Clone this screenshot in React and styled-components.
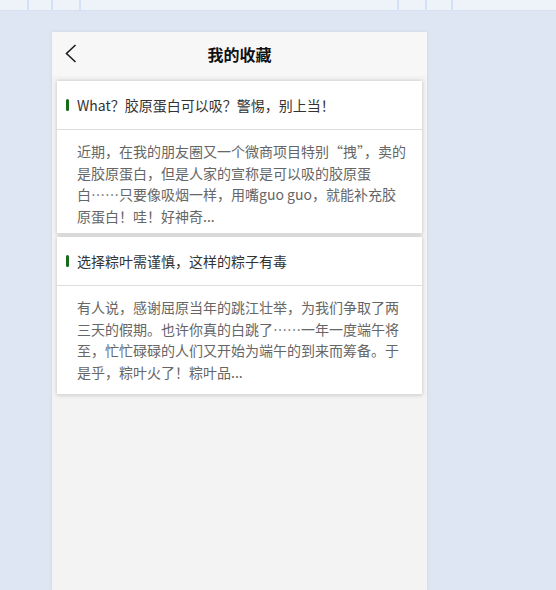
import React from "react";
import styled, { createGlobalStyle } from "styled-components";

const articles = [
  {
    id: 1,
    title: "What？胶原蛋白可以吸？警惕，别上当！",
    summary:
      "近期，在我的朋友圈又一个微商项目特别“拽”，卖的是胶原蛋白，但是人家的宣称是可以吸的胶原蛋白……只要像吸烟一样，用嘴guo guo，就能补充胶原蛋白！哇！好神奇...",
  },
  {
    id: 2,
    title: "选择粽叶需谨慎，这样的粽子有毒",
    summary:
      "有人说，感谢屈原当年的跳江壮举，为我们争取了两三天的假期。也许你真的白跳了……一年一度端午将至，忙忙碌碌的人们又开始为端午的到来而筹备。于是乎，粽叶火了！粽叶品...",
  },
];

const ticks = [27, 22, 26, 316, 26, 24];

const App = () => {
  return (
    <>
      <GlobalStyle />
      <Ruler>
        {ticks.map((gap, i) => (
          <Tick key={i} $offset={gap} />
        ))}
      </Ruler>
      <Stage>
        <Phone>
          <Header>
            <BackButton aria-label="返回">
              <svg width="12" height="19" viewBox="0 0 12 19">
                <path
                  d="M10.5 1 L1.5 9.5 L10.5 18"
                  fill="none"
                  stroke="#1f1f1f"
                  strokeWidth="1.6"
                />
              </svg>
            </BackButton>
            <Title>我的收藏</Title>
          </Header>
          <List>
            {articles.map((item) => (
              <Card key={item.id}>
                <CardHead>
                  <Marker />
                  <CardTitle>{item.title}</CardTitle>
                </CardHead>
                <CardBody>{item.summary}</CardBody>
              </Card>
            ))}
          </List>
        </Phone>
      </Stage>
    </>
  );
};

export default App;

const GlobalStyle = createGlobalStyle`
  html, body {
    margin: 0;
    padding: 0;
    background: #dfe6f3;
    font-family: "Noto Sans CJK SC", "Liberation Sans", sans-serif;
  }
  #root {
    height: 590px;
    display: flex;
    flex-direction: column;
    overflow: hidden;
  }
`;

const Ruler = styled.div`
  height: 10px;
  flex-shrink: 0;
  display: flex;
  background: #eef2f9;
  border-bottom: 1px solid #d8e1ef;
`;

const Tick = styled.span`
  width: 2px;
  height: 10px;
  margin-left: ${(p) => p.$offset}px;
  background: #d3e1fb;
`;

const Stage = styled.div`
  flex: 1;
  display: flex;
  padding: 21px 0 0 52px;
  min-height: 0;
`;

const Phone = styled.div`
  width: 375px;
  display: flex;
  flex-direction: column;
  background: #f3f3f3;
  box-shadow: 0 0 3px rgba(120, 130, 150, 0.18);
`;

const Header = styled.div`
  height: 44px;
  flex-shrink: 0;
  display: flex;
  align-items: center;
  justify-content: center;
  position: relative;
  background: #f7f7f7;
`;

const BackButton = styled.button`
  position: absolute;
  left: 13px;
  top: 12px;
  padding: 0;
  border: none;
  background: transparent;
  display: flex;
`;

const Title = styled.h1`
  margin: 0;
  font-size: 16px;
  font-weight: bold;
  color: #111;
`;

const List = styled.div`
  display: flex;
  flex-direction: column;
  gap: 3px;
  padding: 5px;
`;

const Card = styled.div`
  background: #fff;
  box-shadow: 0 0 4px rgba(0, 0, 0, 0.22);
  border-bottom: 1px solid #dcdcdc;
`;

const CardHead = styled.div`
  height: 48px;
  display: flex;
  align-items: center;
  gap: 8px;
  padding-left: 9px;
  border-bottom: 1px solid #dedede;
`;

const Marker = styled.span`
  width: 3px;
  height: 12px;
  border-radius: 2px;
  background: #156b16;
`;

const CardTitle = styled.div`
  font-size: 14px;
  color: #333;
`;

const CardBody = styled.p`
  margin: 0;
  padding: 11px 14px 5px 20px;
  font-size: 14px;
  line-height: 21.7px;
  color: #666;
  ${Card}:last-child & {
    padding-bottom: 10px;
  }
`;
